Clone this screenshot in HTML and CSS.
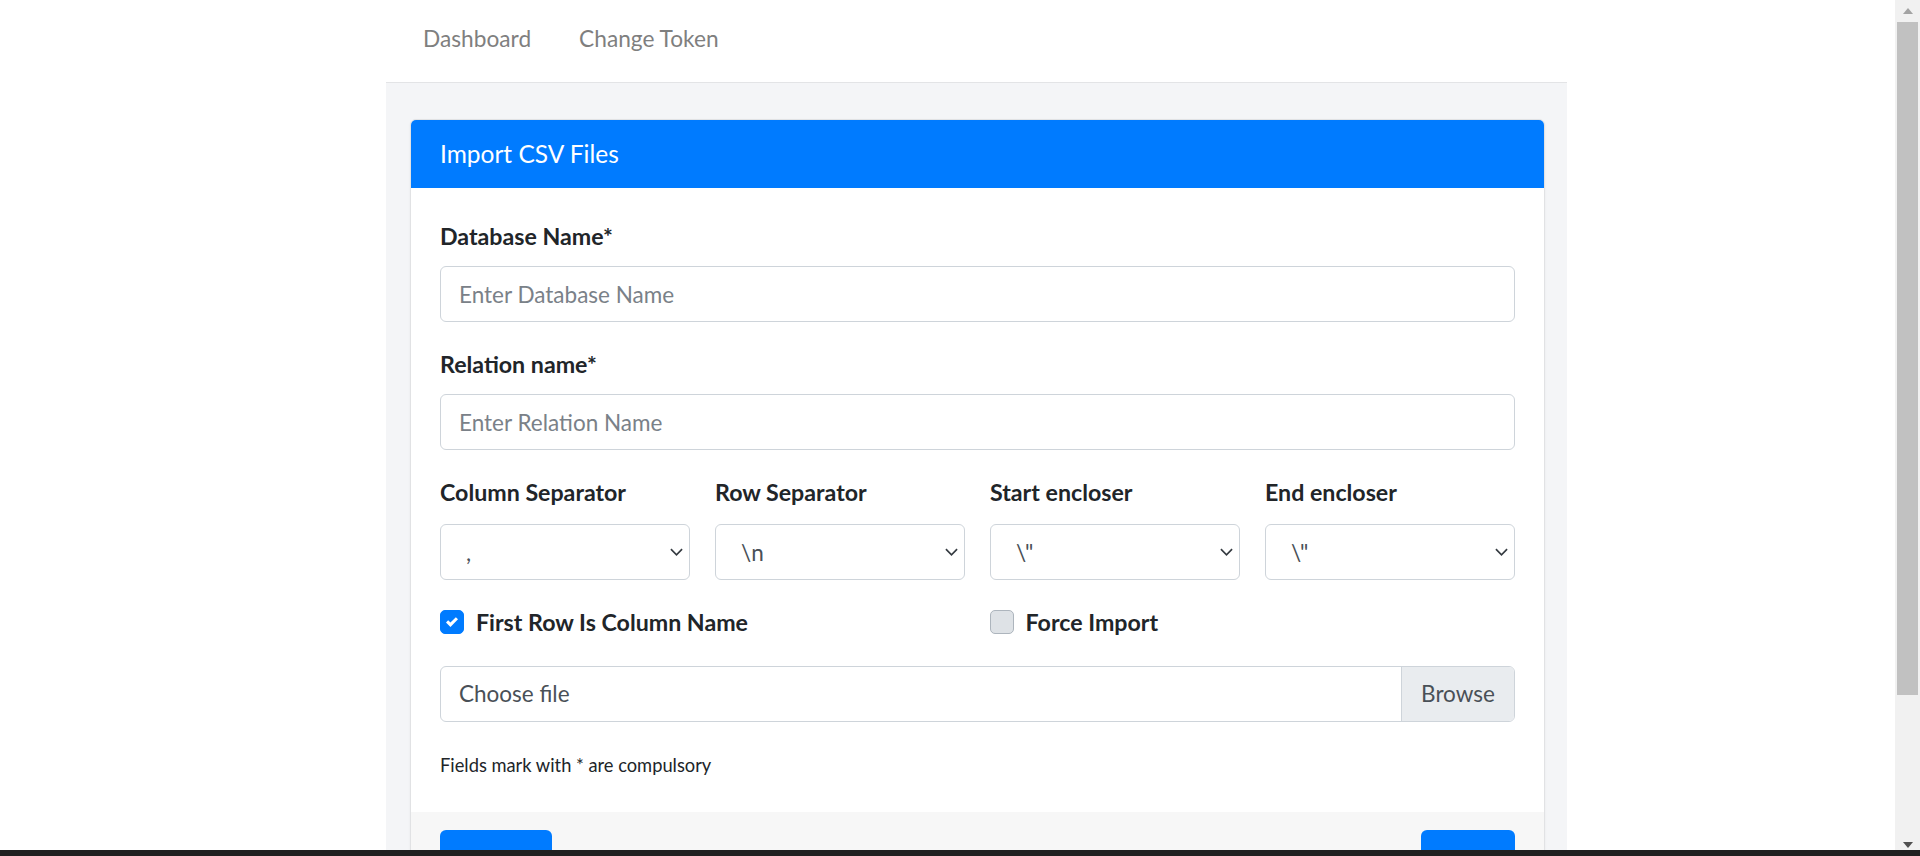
FILE: index.html
```html
<!DOCTYPE html>
<html lang="en">
<head>
<meta charset="utf-8">
<title>Import CSV Files</title>
<link rel="stylesheet" href="styles.css">
</head>
<body>
<div class="screen">
  <div class="viewport">
    <div class="page">
      <nav class="topnav">
        <a class="nav-link" href="#">Dashboard</a>
        <a class="nav-link" href="#">Change Token</a>
      </nav>
      <main class="content">
        <section class="card">
          <header class="card-header"><h5 class="card-title">Import CSV Files</h5></header>
          <div class="card-body">
            <div class="form-group">
              <label class="form-label">Database Name*</label>
              <input class="form-control" type="text" placeholder="Enter Database Name">
            </div>
            <div class="form-group">
              <label class="form-label">Relation name*</label>
              <input class="form-control" type="text" placeholder="Enter Relation Name">
            </div>
            <div class="form-row four">
              <div class="col">
                <label class="form-label">Column Separator</label>
                <div class="select-wrap">
                  <select class="custom-select"><option>,</option></select>
                  <svg class="chev" viewBox="0 0 14 8" width="14" height="8"><path d="M1 1l6 6 6-6" fill="none" stroke="#343a40" stroke-width="1.8"/></svg>
                </div>
              </div>
              <div class="col">
                <label class="form-label">Row Separator</label>
                <div class="select-wrap">
                  <select class="custom-select"><option>\n</option></select>
                  <svg class="chev" viewBox="0 0 14 8" width="14" height="8"><path d="M1 1l6 6 6-6" fill="none" stroke="#343a40" stroke-width="1.8"/></svg>
                </div>
              </div>
              <div class="col">
                <label class="form-label">Start encloser</label>
                <div class="select-wrap">
                  <select class="custom-select"><option>\"</option></select>
                  <svg class="chev" viewBox="0 0 14 8" width="14" height="8"><path d="M1 1l6 6 6-6" fill="none" stroke="#343a40" stroke-width="1.8"/></svg>
                </div>
              </div>
              <div class="col">
                <label class="form-label">End encloser</label>
                <div class="select-wrap">
                  <select class="custom-select"><option>\"</option></select>
                  <svg class="chev" viewBox="0 0 14 8" width="14" height="8"><path d="M1 1l6 6 6-6" fill="none" stroke="#343a40" stroke-width="1.8"/></svg>
                </div>
              </div>
            </div>
            <div class="form-row two">
              <label class="check">
                <span class="check-box checked"><svg viewBox="0 0 8 8" width="12" height="12"><path d="M6.564.75l-3.59 3.612-1.538-1.55L0 4.26 2.974 7.25 8 2.193z" fill="#fff"/></svg></span>
                <span class="check-label">First Row Is Column Name</span>
              </label>
              <label class="check">
                <span class="check-box"></span>
                <span class="check-label">Force Import</span>
              </label>
            </div>
            <div class="file-input">
              <span class="file-text">Choose file</span>
              <span class="file-btn">Browse</span>
            </div>
            <p class="note">Fields mark with * are compulsory</p>
          </div>
          <footer class="card-footer">
            <button class="btn btn-left" type="button">Upload</button>
            <button class="btn btn-right" type="button">Reset</button>
          </footer>
        </section>
      </main>
    </div>
  </div>
  <div class="scrollbar">
    <div class="sb-btn"><svg viewBox="0 0 10 6" width="10" height="6"><path d="M0 6L5 0l5 6z" fill="#a3a3a3"/></svg></div>
    <div class="sb-thumb"></div>
    <div class="sb-space"></div>
    <div class="sb-btn"><svg viewBox="0 0 10 6" width="10" height="6"><path d="M0 0h10L5 6z" fill="#505050"/></svg></div>
  </div>
</div>
<div class="taskbar"></div>
</body>
</html>
```
FILE: styles.css
```css
* { box-sizing: border-box; }
html, body { margin: 0; padding: 0; }
body {
  height: 856px;
  overflow: hidden;
  font-family: "Lato", "Noto Sans", sans-serif;
  font-size: 22.5px;
  color: #212529;
  background: #fff;
}
.screen { display: flex; height: 856px; }
.viewport { flex: 1; min-width: 0; }
.page {
  margin-left: 386px;
  width: 1181px;
  height: 856px;
  display: flex;
  flex-direction: column;
}
.topnav {
  height: 83px;
  flex: none;
  display: flex;
  align-items: center;
  padding: 0 0 4px 13px;
  border-bottom: 1px solid #e3e4e6;
  background: #fff;
}
.nav-link {
  padding: 0 24px;
  color: #7f7f7f;
  text-decoration: none;
  font-size: 22.7px;
  line-height: 36px;
}
.content {
  flex: 1;
  background: #f4f5f7;
  padding: 36px 22px 0 24px;
  min-height: 0;
}
.card {
  background: #fff;
  border: 1px solid #e1e2e4;
  border-radius: 6px;
  overflow: hidden;
  box-shadow: 0 1px 3px rgba(0,0,0,.05);
}
.card-header {
  background: #007bff;
  height: 68px;
  padding: 0 29px;
  display: flex;
  align-items: center;
}
.card-title {
  margin: 0;
  font-size: 24.5px;
  font-weight: 400;
  color: #fff;
  line-height: 36px;
}
.card-body { padding: 30px 29px 0; }
.form-group { margin-bottom: 24px; }
.form-label {
  display: block;
  font-weight: 700;
  font-size: 23.2px;
  line-height: 36px;
  margin-bottom: 12px;
}
.form-control {
  display: block;
  width: 100%;
  height: 56px;
  padding: 0 18px;
  border: 1px solid #ced4da;
  border-radius: 6px;
  font: inherit;
  color: #495057;
  background: #fff;
}
.form-control::placeholder { color: #7a8188; }
.form-row { display: grid; gap: 25px; }
.form-row.four { grid-template-columns: repeat(4, 1fr); margin-bottom: 24px; }
.form-row.two { grid-template-columns: repeat(2, 1fr); gap: 24px; height: 36px; margin-bottom: 26px; }
.form-row.four .form-label { margin-bottom: 14px; }
.select-wrap { position: relative; }
.custom-select {
  display: block;
  width: 100%;
  height: 56px;
  padding: 0 40px 0 25px;
  border: 1px solid #ced4da;
  border-radius: 6px;
  font: inherit;
  color: #495057;
  background: #fff;
  -webkit-appearance: none;
  appearance: none;
}
.chev { position: absolute; right: 7px; top: 24px; width: 13px; height: 8px; }
.check { display: flex; align-items: center; font-weight: 700; font-size: 23.2px; line-height: 36px; }
.check-box {
  width: 24px;
  height: 24px;
  border-radius: 5px;
  border: 1px solid #adb5bd;
  background: #dee2e6;
  margin-right: 12px;
  display: flex;
  align-items: center;
  justify-content: center;
}
.check-box.checked { background: #007bff; border-color: #007bff; }
.file-input {
  display: flex;
  height: 56px;
  border: 1px solid #ced4da;
  border-radius: 6px;
  overflow: hidden;
  color: #495057;
}
.file-text { flex: 1; padding: 0 18px; line-height: 54px; }
.file-btn {
  width: 113px;
  background: #e9ecef;
  border-left: 1px solid #ced4da;
  text-align: center;
  line-height: 54px;
}
.note { margin: 29px 0 0; font-size: 18.3px; line-height: 29px; height: 61px; }
.card-footer {
  background: #f7f7f7;
  padding: 18px 29px;
  display: flex;
  justify-content: space-between;
}
.btn {
  height: 56px;
  border: 0;
  border-radius: 6px;
  background: #007bff;
  color: #fff;
  font: inherit;
  padding: 0 18px;
}
.btn-left { width: 112px; }
.btn-right { width: 94px; }
.scrollbar {
  width: 25px;
  flex: none;
  background: #f1f1f1;
  display: flex;
  flex-direction: column;
  padding: 0 2px;
}
.sb-btn { height: 22px; display: flex; align-items: center; justify-content: center; }
.sb-thumb { height: 673px; background: #c1c1c1; }
.sb-space { flex: 1; }
.taskbar { position: fixed; left: 0; right: 0; bottom: 0; height: 6px; background: #202020; }
```
